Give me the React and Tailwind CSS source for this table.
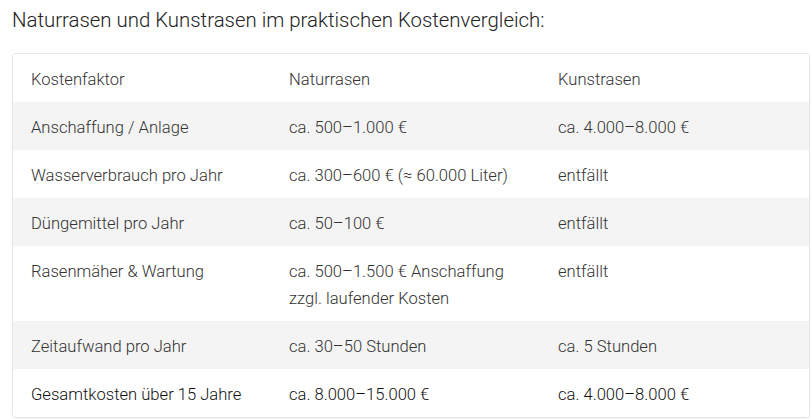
const rows = [
  ['Anschaffung / Anlage', ['ca. 500–1.000 €'], 'ca. 4.000–8.000 €'],
  ['Wasserverbrauch pro Jahr', ['ca. 300–600 € (≈ 60.000 Liter)'], 'entfällt'],
  ['Düngemittel pro Jahr', ['ca. 50–100 €'], 'entfällt'],
  ['Rasenmäher & Wartung', ['ca. 500–1.500 € Anschaffung', 'zzgl. laufender Kosten'], 'entfällt'],
  ['Zeitaufwand pro Jahr', ['ca. 30–50 Stunden'], 'ca. 5 Stunden'],
  ['Gesamtkosten über 15 Jahre', ['ca. 8.000–15.000 €'], 'ca. 4.000–8.000 €'],
]

export default function App() {
  return (
    <div className="w-[812px] h-[419px] bg-white overflow-hidden font-['Roboto'] font-light text-[#333]">
      <h2 className="px-3 pt-[6px] text-[20.4px] leading-[28px] font-light text-[#222]">
        Naturrasen und Kunstrasen im praktischen Kostenvergleich:
      </h2>

      <div className="ml-3 mt-[19px] w-[798px] border border-[#e6e6e6] rounded shadow-[0_1px_2px_rgba(0,0,0,0.05)] overflow-hidden">
        {/* Kopfzeile */}
        <div className="flex text-[16.6px] leading-[27px] bg-white">
          <div className="w-[258px] pl-[18px] pt-[12px] pb-[9px]">Kostenfaktor</div>
          <div className="w-[269px] pl-[18px] pt-[12px] pb-[9px]">Naturrasen</div>
          <div className="flex-1 pl-[18px] pt-[12px] pb-[9px]">Kunstrasen</div>
        </div>

        {rows.map(([faktor, natur, kunst], i) => (
          <div
            key={faktor}
            className={`flex text-[16.6px] leading-[27px] ${i % 2 === 0 ? 'bg-[#f4f4f4]' : 'bg-white'} ${i === rows.length - 1 ? 'text-[#111]' : ''}`}
          >
            <div className="w-[258px] pl-[18px] pt-[12px] pb-[9px]">{faktor}</div>
            <div className="w-[269px] pl-[18px] pt-[12px] pb-[9px]">
              {natur.map(line => <div key={line}>{line}</div>)}
            </div>
            <div className="flex-1 pl-[18px] pt-[12px] pb-[9px]">{kunst}</div>
          </div>
        ))}
      </div>
    </div>
  )
}
